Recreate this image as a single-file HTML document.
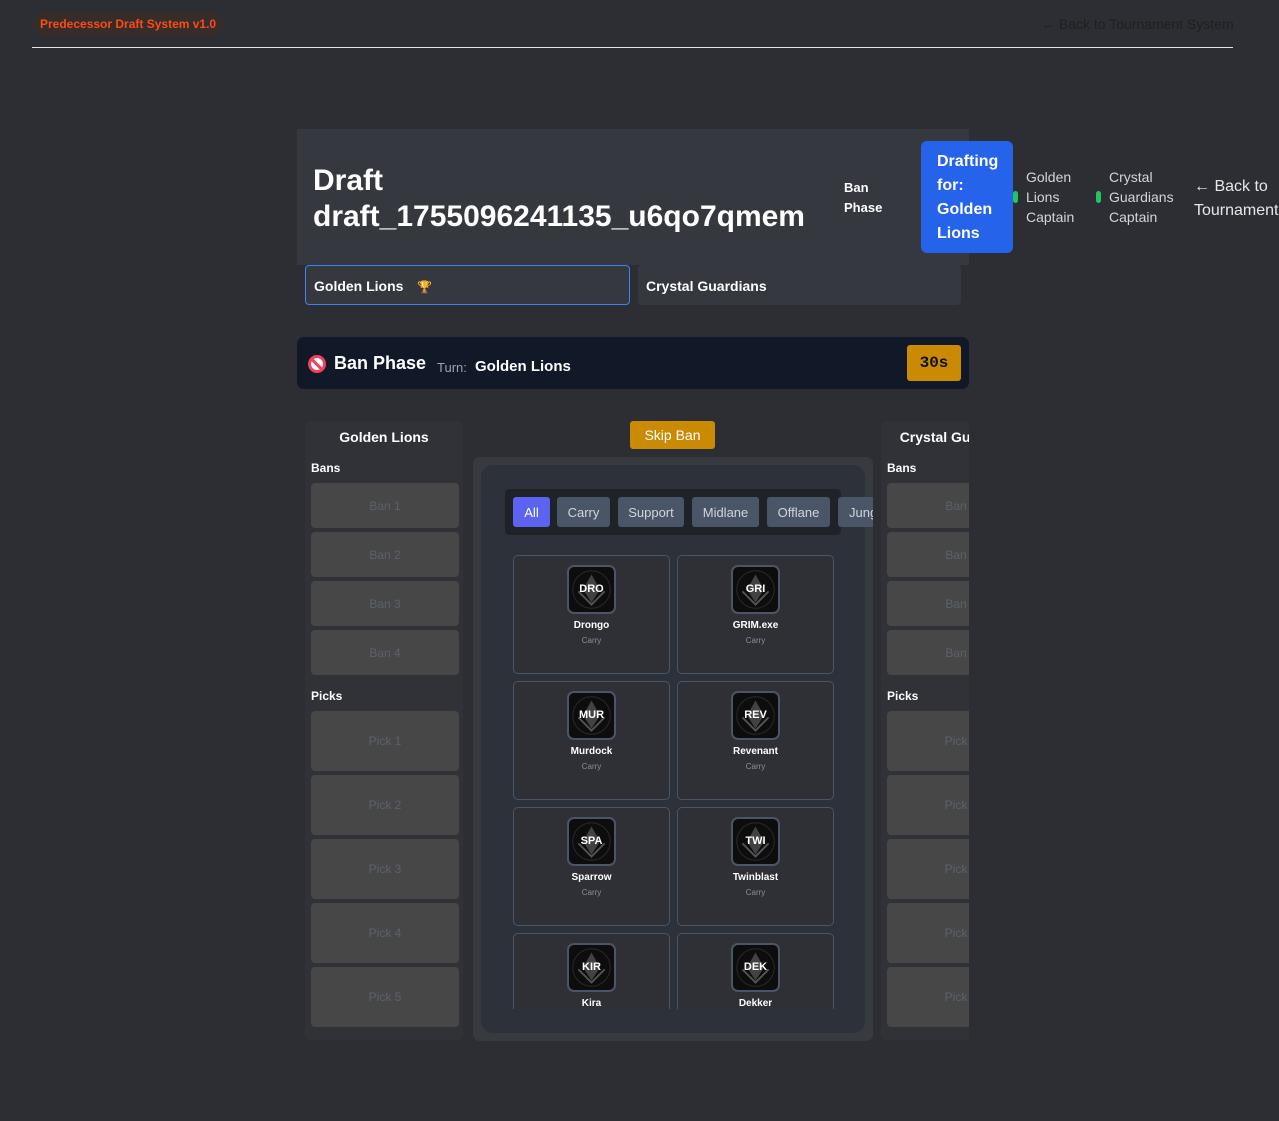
<!DOCTYPE html>
<html><head><meta charset="utf-8"><style>
*{margin:0;padding:0;box-sizing:border-box}
body{width:1279px;height:1121px;background:#2c2e33;font-family:"Liberation Sans",sans-serif;position:relative;overflow:hidden;color:#fff}
.a{position:absolute}
.slot{position:absolute;background:#474747;border-radius:4px;color:#5b616c;font-size:12px;display:flex;align-items:center;justify-content:center}
.fb{position:absolute;top:8px;height:30px;background:#4a5568;border-radius:3px;color:#d1d5db;font-size:13px;display:flex;align-items:center;justify-content:center}
.card{position:absolute;width:157px;height:119px;border:1px solid #4a5568;border-radius:5px;background:#2f3036}
.ic{position:absolute;left:53px;top:9px;width:49px;height:49px;border:2px solid #4a5568;border-radius:7px;background:#0d0d0d;overflow:hidden}
.ic span{position:absolute;left:0;right:0;top:16px;text-align:center;font-size:11px;font-weight:bold;color:#fff}
.nm{position:absolute;left:0;right:0;top:64px;text-align:center;font-size:10px;font-weight:bold}
.rl{position:absolute;left:0;right:0;top:80px;text-align:center;font-size:8px;color:#8a8f99}
</style></head><body>
<div class="a" style="left:33px;top:12px;width:190px;height:24px;border-radius:12px;background:#362d2b;color:#ff4a14;font-size:12px;font-weight:bold;line-height:24px;padding-left:7px;white-space:nowrap">Predecessor Draft System v1.0</div>
<div class="a" style="left:1041px;top:16px;font-size:14px;color:#1e1f22;white-space:nowrap">← Back to Tournament System</div>
<div class="a" style="left:32px;top:47px;width:1201px;height:1px;background:#e5e5e5"></div>

<div class="a" style="left:297px;top:129px;width:672px;height:136px;background:#363840"></div>
<div class="a" style="left:313px;top:163px;font-size:30px;font-weight:bold;line-height:36px;white-space:nowrap">Draft<br>draft_1755096241135_u6qo7qmem</div>
<div class="a" style="left:844px;top:178px;font-size:13px;font-weight:bold;line-height:20px">Ban<br>Phase</div>
<div class="a" style="left:921px;top:141px;width:92px;height:112px;background:#2563eb;border-radius:6px;padding:9px 0 0 16px;font-size:16px;font-weight:bold;line-height:24px">Drafting<br>for:<br>Golden<br>Lions</div>
<div class="a" style="left:1013px;top:191px;width:5px;height:12px;background:#22c55e;border-radius:3px"></div>
<div class="a" style="left:1026px;top:167px;font-size:14px;line-height:20px;color:#d1d5db">Golden<br>Lions<br>Captain</div>
<div class="a" style="left:1096px;top:191px;width:5px;height:12px;background:#22c55e;border-radius:3px"></div>
<div class="a" style="left:1109px;top:167px;font-size:14px;line-height:20px;color:#d1d5db">Crystal<br>Guardians<br>Captain</div>
<div class="a" style="left:1194px;top:175px;font-size:16px;line-height:24px;color:#e5e7eb;white-space:nowrap">← Back to<br>Tournament</div>

<div class="a" style="left:305px;top:265px;width:325px;height:40px;border:1px solid #3b82f6;border-radius:4px;background:#363840;font-size:14px;font-weight:bold;line-height:40px;padding-left:8px">Golden Lions <span style="color:#e0a020;font-size:12px;margin-left:10px">🏆</span></div>
<div class="a" style="left:638px;top:265px;width:323px;height:40px;border-radius:4px;background:#363840;font-size:14px;font-weight:bold;line-height:42px;padding-left:8px">Crystal Guardians</div>

<div class="a" style="left:297px;top:337px;width:672px;height:52px;background:#111827;border-radius:7px"></div>
<div class="a" style="left:308px;top:355px;width:18px;height:18px;border-radius:50%;background:#f43f5e;"><div style="position:absolute;left:3px;top:3px;width:12px;height:12px;border-radius:50%;background:#fff"></div><div style="position:absolute;left:2px;top:7.5px;width:14px;height:3px;background:#f43f5e;transform:rotate(45deg)"></div></div>
<div class="a" style="left:334px;top:353px;font-size:18px;font-weight:bold">Ban Phase</div>
<div class="a" style="left:437px;top:360px;font-size:13px;color:#9ca3af">Turn:</div>
<div class="a" style="left:475px;top:358px;font-size:15px;font-weight:bold">Golden Lions</div>
<div class="a" style="left:907px;top:345px;width:54px;height:36px;background:#ca8a04;border-radius:3px;color:#111;font-family:'Liberation Mono',monospace;font-weight:bold;font-size:16px;text-align:center;line-height:36px">30s</div>

<div class="a" style="left:305px;top:421px;width:158px;height:619px;background:#303237;border-radius:6px"></div>
<div class="a" style="left:305px;top:429px;width:158px;text-align:center;font-size:14px;font-weight:bold">Golden Lions</div>
<div class="a" style="left:311px;top:461px;font-size:12px;font-weight:bold">Bans</div>
<div class="slot" style="left:311px;top:483px;width:148px;height:45px">Ban 1</div>
<div class="slot" style="left:311px;top:532px;width:148px;height:45px">Ban 2</div>
<div class="slot" style="left:311px;top:581px;width:148px;height:45px">Ban 3</div>
<div class="slot" style="left:311px;top:630px;width:148px;height:45px">Ban 4</div>
<div class="a" style="left:311px;top:689px;font-size:12px;font-weight:bold">Picks</div>
<div class="slot" style="left:311px;top:711px;width:148px;height:60px">Pick 1</div>
<div class="slot" style="left:311px;top:775px;width:148px;height:60px">Pick 2</div>
<div class="slot" style="left:311px;top:839px;width:148px;height:60px">Pick 3</div>
<div class="slot" style="left:311px;top:903px;width:148px;height:60px">Pick 4</div>
<div class="slot" style="left:311px;top:967px;width:148px;height:60px">Pick 5</div>

<div class="a" style="left:881px;top:421px;width:88px;height:619px;overflow:hidden">
 <div class="a" style="left:0;top:0;width:158px;height:619px;background:#303237;border-radius:6px"></div>
 <div class="a" style="left:0;top:8px;width:158px;text-align:center;font-size:14px;font-weight:bold">Crystal Guardians</div>
 <div class="a" style="left:6px;top:40px;font-size:12px;font-weight:bold">Bans</div>
 <div class="slot" style="left:6px;top:62px;width:148px;height:45px">Ban 1</div>
 <div class="slot" style="left:6px;top:111px;width:148px;height:45px">Ban 2</div>
 <div class="slot" style="left:6px;top:160px;width:148px;height:45px">Ban 3</div>
 <div class="slot" style="left:6px;top:209px;width:148px;height:45px">Ban 4</div>
 <div class="a" style="left:6px;top:268px;font-size:12px;font-weight:bold">Picks</div>
 <div class="slot" style="left:6px;top:290px;width:148px;height:60px">Pick 1</div>
 <div class="slot" style="left:6px;top:354px;width:148px;height:60px">Pick 2</div>
 <div class="slot" style="left:6px;top:418px;width:148px;height:60px">Pick 3</div>
 <div class="slot" style="left:6px;top:482px;width:148px;height:60px">Pick 4</div>
 <div class="slot" style="left:6px;top:546px;width:148px;height:60px">Pick 5</div>
</div>

<div class="a" style="left:630px;top:421px;width:85px;height:28px;background:#ca8a04;border-radius:3px;font-size:14px;text-align:center;line-height:28px">Skip Ban</div>
<div class="a" style="left:473px;top:457px;width:400px;height:584px;background:#373a3e;border-radius:7px"></div>
<div class="a" style="left:481px;top:465px;width:384px;height:568px;background:#2d323a;border-radius:12px"></div>
<div class="a" style="left:505px;top:489px;width:336px;height:46px;background:#1f2328;border-radius:4px">
 <div class="fb" style="left:8px;width:37px;background:#5b63f0;color:#fff">All</div>
 <div class="fb" style="left:52px;width:53px">Carry</div>
 <div class="fb" style="left:113px;width:66px">Support</div>
 <div class="fb" style="left:187px;width:67px">Midlane</div>
 <div class="fb" style="left:262px;width:63px">Offlane</div>
</div>
<div class="a" style="left:838px;top:497px;width:35px;height:30px;overflow:hidden"><div class="fb" style="left:0;top:0;width:60px;justify-content:flex-start;padding-left:11px">Jungle</div></div>

<div class="a" style="left:513px;top:555px;width:321px;height:454px;overflow:hidden">
<svg width="0" height="0" style="position:absolute"><defs><g id="lg"><circle cx="24" cy="24" r="20" fill="none" stroke="#2a2a2a" stroke-width="1"/><path d="M24 8 L33 24 L24 38 L15 24Z" fill="#5a5a5a" opacity=".7"/><path d="M10 26 Q18 34 24 40 Q30 34 38 26" fill="none" stroke="#555" stroke-width="2"/></g></defs></svg>
 <div class="card" style="left:0;top:0"><div class="ic"><svg width="45" height="45" viewBox="0 0 48 48"><use href="#lg"/></svg><span>DRO</span></div><div class="nm">Drongo</div><div class="rl">Carry</div></div>
 <div class="card" style="left:164px;top:0"><div class="ic"><svg width="45" height="45" viewBox="0 0 48 48"><use href="#lg"/></svg><span>GRI</span></div><div class="nm">GRIM.exe</div><div class="rl">Carry</div></div>
 <div class="card" style="left:0;top:126px"><div class="ic"><svg width="45" height="45" viewBox="0 0 48 48"><use href="#lg"/></svg><span>MUR</span></div><div class="nm">Murdock</div><div class="rl">Carry</div></div>
 <div class="card" style="left:164px;top:126px"><div class="ic"><svg width="45" height="45" viewBox="0 0 48 48"><use href="#lg"/></svg><span>REV</span></div><div class="nm">Revenant</div><div class="rl">Carry</div></div>
 <div class="card" style="left:0;top:252px"><div class="ic"><svg width="45" height="45" viewBox="0 0 48 48"><use href="#lg"/></svg><span>SPA</span></div><div class="nm">Sparrow</div><div class="rl">Carry</div></div>
 <div class="card" style="left:164px;top:252px"><div class="ic"><svg width="45" height="45" viewBox="0 0 48 48"><use href="#lg"/></svg><span>TWI</span></div><div class="nm">Twinblast</div><div class="rl">Carry</div></div>
 <div class="card" style="left:0;top:378px"><div class="ic"><svg width="45" height="45" viewBox="0 0 48 48"><use href="#lg"/></svg><span>KIR</span></div><div class="nm">Kira</div><div class="rl">Carry</div></div>
 <div class="card" style="left:164px;top:378px"><div class="ic"><svg width="45" height="45" viewBox="0 0 48 48"><use href="#lg"/></svg><span>DEK</span></div><div class="nm">Dekker</div><div class="rl">Carry</div></div>
</div>
</body></html>
